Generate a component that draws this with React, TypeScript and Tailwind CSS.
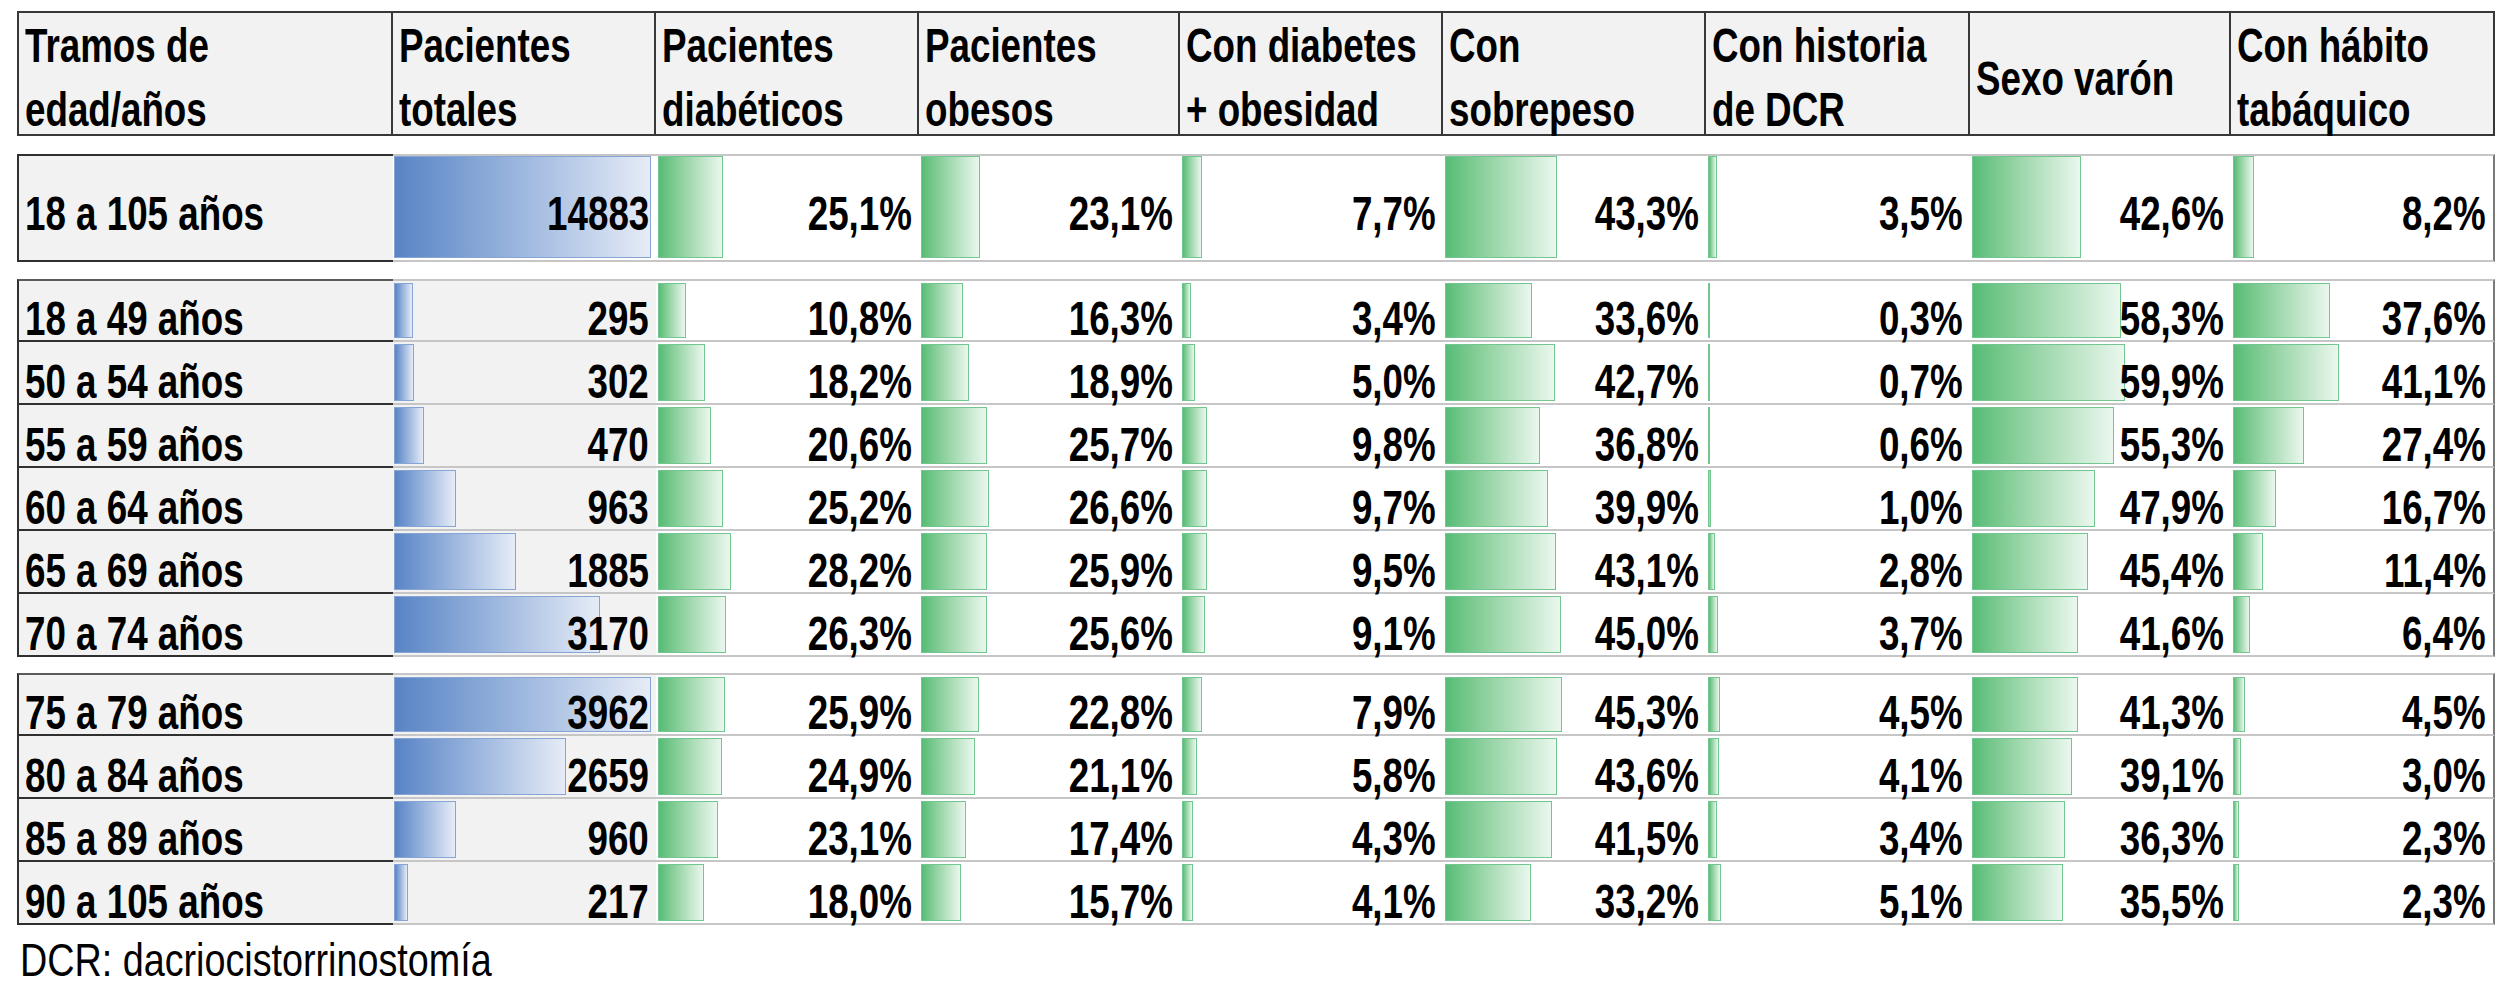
type Row = { label: string; total: number; pcts: number[] };

const COLS = "grid grid-cols-[376px_263px_263px_261px_263px_263px_264px_261px_264px]";
const CELL_W = [263, 263, 261, 263, 263, 264, 261, 264];

const headers: string[][] = [
  ["Tramos de", "edad/años"],
  ["Pacientes", "totales"],
  ["Pacientes", "diabéticos"],
  ["Pacientes", "obesos"],
  ["Con diabetes", "+ obesidad"],
  ["Con", "sobrepeso"],
  ["Con historia", "de DCR"],
  ["Sexo varón"],
  ["Con hábito", "tabáquico"],
];

const summary: Row = { label: "18 a 105 años", total: 14883, pcts: [25.1, 23.1, 7.7, 43.3, 3.5, 42.6, 8.2] };

const groupA: Row[] = [
  { label: "18 a 49 años", total: 295, pcts: [10.8, 16.3, 3.4, 33.6, 0.3, 58.3, 37.6] },
  { label: "50 a 54 años", total: 302, pcts: [18.2, 18.9, 5.0, 42.7, 0.7, 59.9, 41.1] },
  { label: "55 a 59 años", total: 470, pcts: [20.6, 25.7, 9.8, 36.8, 0.6, 55.3, 27.4] },
  { label: "60 a 64 años", total: 963, pcts: [25.2, 26.6, 9.7, 39.9, 1.0, 47.9, 16.7] },
  { label: "65 a 69 años", total: 1885, pcts: [28.2, 25.9, 9.5, 43.1, 2.8, 45.4, 11.4] },
  { label: "70 a 74 años", total: 3170, pcts: [26.3, 25.6, 9.1, 45.0, 3.7, 41.6, 6.4] },
];

const groupB: Row[] = [
  { label: "75 a 79 años", total: 3962, pcts: [25.9, 22.8, 7.9, 45.3, 4.5, 41.3, 4.5] },
  { label: "80 a 84 años", total: 2659, pcts: [24.9, 21.1, 5.8, 43.6, 4.1, 39.1, 3.0] },
  { label: "85 a 89 años", total: 960, pcts: [23.1, 17.4, 4.3, 41.5, 3.4, 36.3, 2.3] },
  { label: "90 a 105 años", total: 217, pcts: [18.0, 15.7, 4.1, 33.2, 5.1, 35.5, 2.3] },
];

const MAX_AGE_TOTAL = 3962;

const fmt = (n: number) => n.toFixed(1).replace(".", ",") + "%";

function Squeeze({ children, right }: { children: React.ReactNode; right?: boolean }) {
  return (
    <span
      className={
        right
          ? "inline-block whitespace-nowrap scale-x-[0.75] origin-right"
          : "inline-block whitespace-nowrap scale-x-[0.75] origin-left"
      }
    >
      {children}
    </span>
  );
}

function BarCell({
  text,
  width,
  blue,
  tall,
  first,
  last,
  shaded,
}: {
  text: string;
  width: number;
  blue?: boolean;
  tall?: boolean;
  first?: boolean;
  last?: boolean;
  shaded?: boolean;
}) {
  return (
    <div
      className={[
        "grid border-b-2 border-[#c6c6c6]",
        tall ? "h-[108px] border-t-2" : "h-[63px]",
        first ? "border-t-2" : "",
        last ? "border-r-2 border-r-[#7a7a7a]" : "",
        shaded ? "bg-[#f2f2f2]" : "bg-white",
      ].join(" ")}
    >
      <div className={tall ? "[grid-area:1/1] flex pb-[2px]" : "[grid-area:1/1] flex py-[2px]"}>
        {blue ? (
          <div
            className="ml-[1px] border border-[#86a5d4] bg-linear-to-r from-[#5884c5] to-[#e6ecf6]"
            style={{ width }}
          />
        ) : (
          <div
            className="ml-[2px] border border-[#74c690] bg-linear-to-r from-[#55bc75] to-[#eaf7ee]"
            style={{ width }}
          />
        )}
      </div>
      <div
        className={
          tall
            ? "[grid-area:1/1] flex items-end justify-end pr-[7px] pb-[25px] leading-[44px]"
            : "[grid-area:1/1] flex items-end justify-end pr-[7px] leading-[44px]"
        }
      >
        <Squeeze right>{text}</Squeeze>
      </div>
    </div>
  );
}

function LabelCell({ text, tall, first }: { text: string; tall?: boolean; first?: boolean }) {
  return (
    <div
      className={[
        "flex items-end pl-[6px] leading-[44px] bg-[#f2f2f2] border-l-2 border-b-2 border-[#303030]",
        tall ? "h-[108px] border-t-2 pb-[25px]" : "h-[63px]",
        first ? "border-t-2 border-t-[#5a5a5a]" : "",
      ].join(" ")}
    >
      <Squeeze>{text}</Squeeze>
    </div>
  );
}

function GroupRows({ rows }: { rows: Row[] }) {
  return (
    <div className={COLS}>
      {rows.map((r, i) => (
        <div key={r.label} className="contents">
          <LabelCell text={r.label} first={i === 0} />
          <BarCell
            text={String(r.total)}
            blue
            shaded
            first={i === 0}
            width={Math.round((r.total / MAX_AGE_TOTAL) * 257)}
          />
          {r.pcts.map((p, j) => (
            <BarCell
              key={j}
              text={fmt(p)}
              first={i === 0}
              last={j === r.pcts.length - 1}
              width={Math.max(2, Math.round((p / 100) * (CELL_W[j + 1] - 5)))}
            />
          ))}
        </div>
      ))}
    </div>
  );
}

export default function App() {
  return (
    <div className="min-h-screen bg-white pl-[17px] pt-[11px] font-['Liberation_Sans',Arial,sans-serif] text-black">
      <div className={COLS}>
        {headers.map((lines, i) => (
          <div
            key={i}
            className={[
              "h-[125px] bg-[#f2f2f2] border-t-2 border-b-2 border-r-2 border-[#383838] pl-[6px] text-[49px] font-bold leading-[64px]",
              i === 0 ? "border-l-2" : "",
              lines.length === 1 ? "pt-[33px]" : "",
            ].join(" ")}
          >
            {lines.map((l) => (
              <div key={l}>
                <Squeeze>{l}</Squeeze>
              </div>
            ))}
          </div>
        ))}
      </div>

      <div className="mt-[18px] text-[49px] font-bold">
        <div className={COLS}>
          <LabelCell text={summary.label} tall />
          <BarCell text={String(summary.total)} blue tall width={257} />
          {summary.pcts.map((p, j) => (
            <BarCell
              key={j}
              text={fmt(p)}
              tall
              last={j === summary.pcts.length - 1}
              width={Math.max(2, Math.round((p / 100) * (CELL_W[j + 1] - 5)))}
            />
          ))}
        </div>
      </div>

      <div className="mt-[17px] text-[49px] font-bold">
        <GroupRows rows={groupA} />
      </div>

      <div className="mt-[16px] text-[49px] font-bold">
        <GroupRows rows={groupB} />
      </div>

      <div className="mt-[12px] pl-[3px] text-[46px] leading-[46px]">
        <span className="inline-block whitespace-nowrap scale-x-[0.82] origin-left">DCR: dacriocistorrinostomía</span>
      </div>
    </div>
  );
}
